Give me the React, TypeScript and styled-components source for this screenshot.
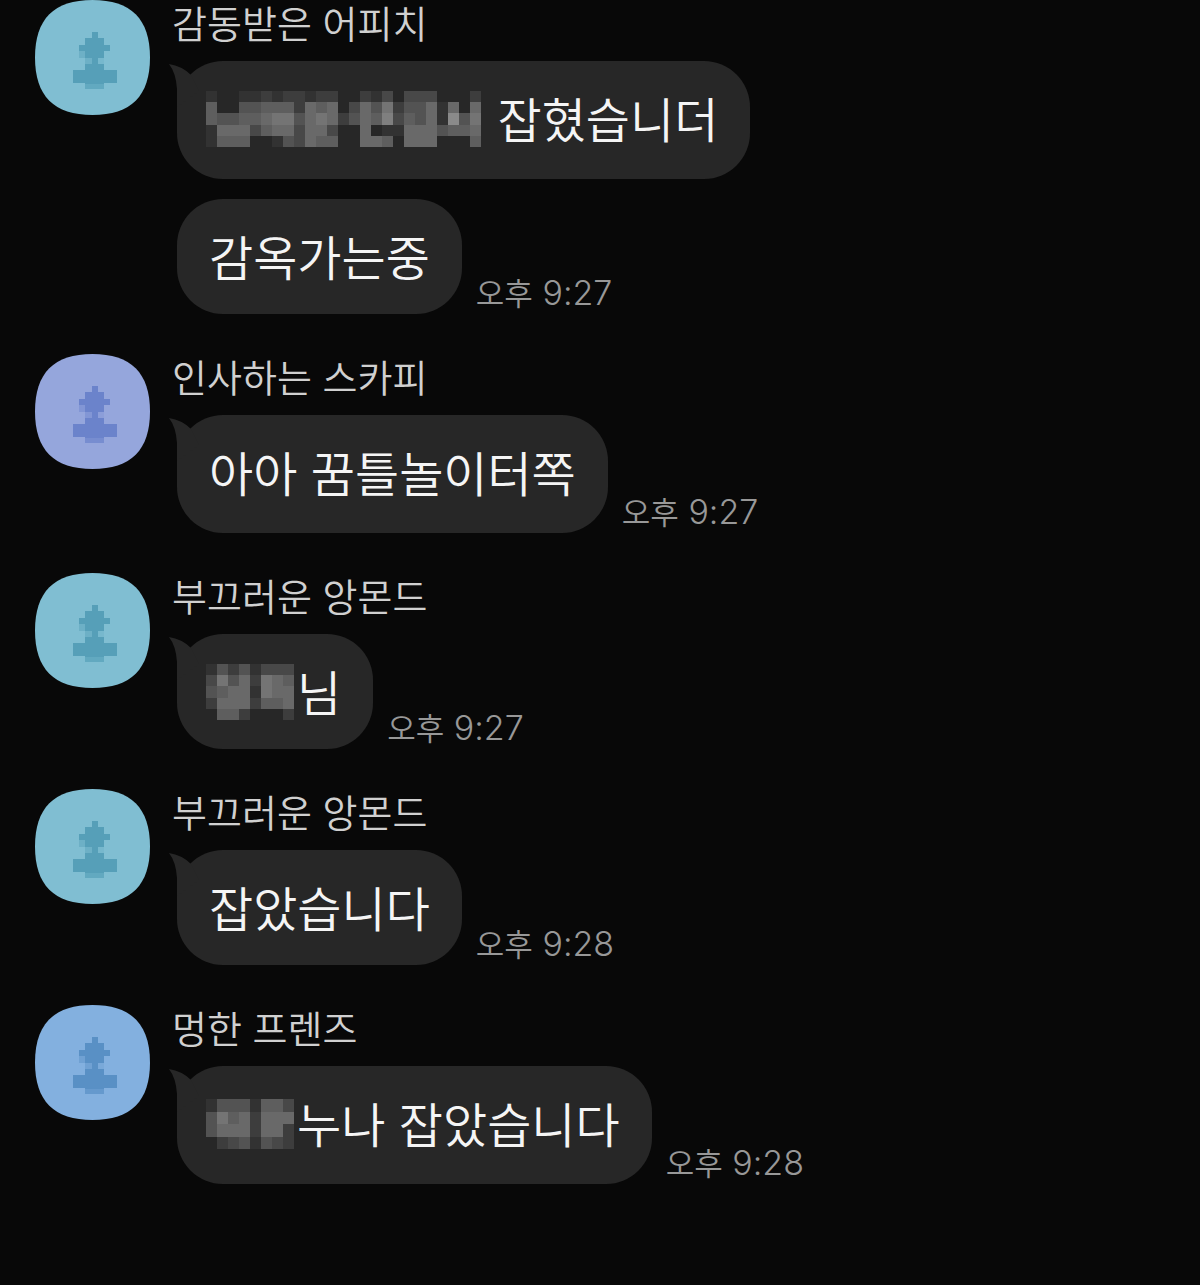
import React from 'react';
import styled, { createGlobalStyle } from 'styled-components';

const GlobalStyle = createGlobalStyle`
  body {
    margin: 0;
    background: #080808;
  }
`;

const Chat = styled.main`
  display: flex;
  flex-direction: column;
  gap: 40px;
  box-sizing: border-box;
  min-height: 100vh;
  padding: 0 35px 40px;
  color: #f5f5f5;
  font-family: 'Inter', 'Noto Sans CJK KR', sans-serif;
  font-weight: 350;
`;

const Group = styled.article`
  display: grid;
  grid-template-columns: 115px 1fr;
  column-gap: 22px;
`;

const AvatarArt = styled.svg`
  display: block;
  width: 115px;
  height: 115px;
`;

const Name = styled.h2`
  margin: 0;
  height: 61px;
  font-size: 38px;
  font-weight: 350;
  line-height: 48px;
  color: #d0d0d0;
`;

const Messages = styled.div`
  display: flex;
  flex-direction: column;
  gap: 20px;
  padding-left: 5px;
`;

const Row = styled.div`
  display: flex;
  align-items: flex-end;
  gap: 14px;
`;

const Bubble = styled.p<{ $roomy?: boolean }>`
  position: relative;
  display: flex;
  align-items: center;
  margin: 0;
  padding: 28px 32px ${(p) => (p.$roomy ? 26 : 23)}px;
  border-radius: 46px;
  background: #272727;
  font-size: 48px;
  line-height: 64px;
  white-space: pre;
`;

const TailArt = styled.svg`
  position: absolute;
  left: -8px;
  top: 0;
  width: 30px;
  height: 46px;
`;

const MosaicArt = styled.svg<{ $columns: number; $rows: number }>`
  flex: none;
  width: ${(p) => p.$columns * 11}px;
  height: ${(p) => (p.$rows > 4 ? 56 : 50)}px;
  margin: 0 3px 4px -3px;
`;

const Time = styled.time`
  font-size: 34px;
  line-height: 40px;
  color: #989898;
`;

const Meridiem = styled.span`
  font-size: 31px;
`;

const PALETTES = {
  teal: { back: '#80bed2', figure: '#569fb8' },
  violet: { back: '#95a6dc', figure: '#6b83cb' },
  blue: { back: '#83b0df', figure: '#5990c5' },
};

/* Each digit is the brightness of one block of a censored name. */
const PIXELS = {
  long: [
    '1001121221220021303330002',
    '5004455526560364724461606',
    '5445567746762465835461947',
    '1666356636630060116664556',
    '1555001436550066506660005',
  ],
  shortA: ['14241333', '37462765', '45661766', '26662556', '05520002'],
  shortB: ['14441553', '47562666', '46662662', '02341432'],
};

type Message = {
  text: string;
  pixels?: keyof typeof PIXELS;
  roomy?: boolean;
  time?: string;
};

type Sender = {
  name: string;
  palette: keyof typeof PALETTES;
  messages: Message[];
};

const SENDERS: Sender[] = [
  {
    name: '감동받은 어피치',
    palette: 'teal',
    messages: [
      { text: ' 잡혔습니더', pixels: 'long', roomy: true },
      { text: '감옥가는중', time: '9:27' },
    ],
  },
  {
    name: '인사하는 스카피',
    palette: 'violet',
    messages: [{ text: '아아 꿈틀놀이터쪽', roomy: true, time: '9:27' }],
  },
  {
    name: '부끄러운 앙몬드',
    palette: 'teal',
    messages: [{ text: '님', pixels: 'shortA', time: '9:27' }],
  },
  {
    name: '부끄러운 앙몬드',
    palette: 'teal',
    messages: [{ text: '잡았습니다', time: '9:28' }],
  },
  {
    name: '멍한 프렌즈',
    palette: 'blue',
    messages: [{ text: '누나 잡았습니다', pixels: 'shortB', roomy: true, time: '9:28' }],
  },
];

function Avatar({ palette }: { palette: keyof typeof PALETTES }) {
  const { back, figure } = PALETTES[palette];
  return (
    <AvatarArt viewBox="0 0 115 115" aria-hidden="true">
      <path
        fill={back}
        d="M57.5 0C96 0 115 19 115 57.5S96 115 57.5 115 0 96 0 57.5 19 0 57.5 0Z"
      />
      <g fill={figure} shapeRendering="crispEdges">
        <path d="M57 32h6v6h6v7h6v6h-6v7h-6v6h6v6h13v13H69v1H50v-1H38V70h12v-6h7v-6h-7v-7h-6v-6h6v-7h7z" />
        <path opacity="0.7" d="M50 84h19v5H50z" />
        <path opacity="0.45" d="M44 51h6v7h-6zM50 58h7v6h-7z" />
        <path opacity="0.2" d="M63 58h6v6h-6z" />
      </g>
    </AvatarArt>
  );
}

function Tail() {
  return (
    <TailArt viewBox="0 0 30 46" aria-hidden="true">
      <path fill="#272727" d="M0 3Q13 5 22 14L30 30 8 46V28Q7 12 0 3Z" />
    </TailArt>
  );
}

function Mosaic({ kind }: { kind: keyof typeof PIXELS }) {
  const rows = PIXELS[kind];
  const columns = rows[0].length;
  return (
    <MosaicArt
      $columns={columns}
      $rows={rows.length}
      viewBox={`0 0 ${columns} ${rows.length}`}
      preserveAspectRatio="none"
      shapeRendering="crispEdges"
      aria-hidden="true"
    >
      {rows.flatMap((row, y) =>
        [...row].map((level, x) => {
          const gray = 39 + Number(level) * 11;
          return (
            <rect
              key={`${x}-${y}`}
              x={x}
              y={y}
              width="1"
              height="1"
              fill={`rgb(${gray}, ${gray}, ${gray})`}
            />
          );
        }),
      )}
    </MosaicArt>
  );
}

export default function App() {
  return (
    <>
      <GlobalStyle />
      <Chat lang="ko">
        {SENDERS.map((sender, index) => (
          <Group key={index}>
            <Avatar palette={sender.palette} />
            <div>
              <Name>{sender.name}</Name>
              <Messages>
                {sender.messages.map((message, position) => (
                  <Row key={message.text}>
                    <Bubble $roomy={message.roomy}>
                      {position === 0 && <Tail />}
                      {message.pixels && <Mosaic kind={message.pixels} />}
                      <span>{message.text}</span>
                    </Bubble>
                    {message.time && (
                      <Time>
                        <Meridiem>오후</Meridiem> {message.time}
                      </Time>
                    )}
                  </Row>
                ))}
              </Messages>
            </div>
          </Group>
        ))}
      </Chat>
    </>
  );
}
